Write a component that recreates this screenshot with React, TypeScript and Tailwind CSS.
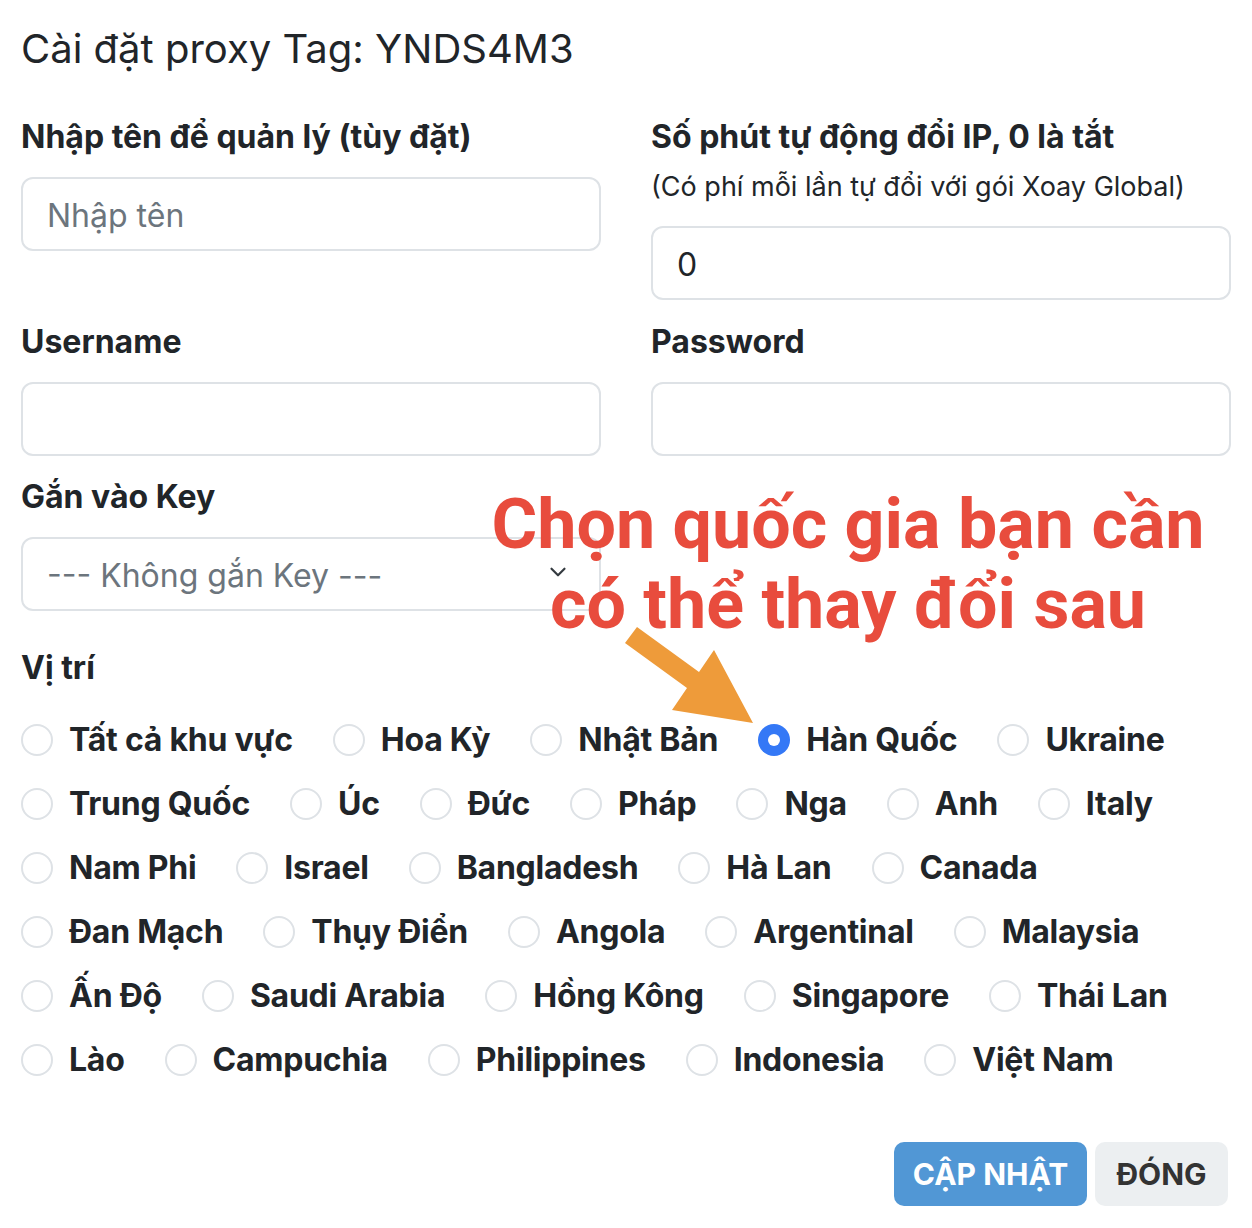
import { ChevronDown } from 'lucide-react';

const rows: string[][] = [
  ['Tất cả khu vực', 'Hoa Kỳ', 'Nhật Bản', 'Hàn Quốc', 'Ukraine'],
  ['Trung Quốc', 'Úc', 'Đức', 'Pháp', 'Nga', 'Anh', 'Italy'],
  ['Nam Phi', 'Israel', 'Bangladesh', 'Hà Lan', 'Canada'],
  ['Đan Mạch', 'Thụy Điển', 'Angola', 'Argentinal', 'Malaysia'],
  ['Ấn Độ', 'Saudi Arabia', 'Hồng Kông', 'Singapore', 'Thái Lan'],
  ['Lào', 'Campuchia', 'Philippines', 'Indonesia', 'Việt Nam'],
];

function Label({ children }: { children: React.ReactNode }) {
  return <div className="text-[32px] leading-[48px] font-bold text-[#212529] mb-[16px]">{children}</div>;
}

function Input({ placeholder, value }: { placeholder?: string; value?: string }) {
  return (
    <div className="h-[74px] border-2 border-[#dee2e6] rounded-[12px] px-[24px] pt-[4px] flex items-center text-[32px]">
      {value ? <span className="text-[#212529]">{value}</span> : <span className="text-[#6c757d]">{placeholder}</span>}
    </div>
  );
}

function Radio({ label, checked }: { label: string; checked?: boolean }) {
  return (
    <div className="flex items-center mr-[40px]">
      {checked ? (
        <div className="w-[32px] h-[32px] rounded-full bg-[#3478f6] flex items-center justify-center">
          <div className="w-[12px] h-[12px] rounded-full bg-white" />
        </div>
      ) : (
        <div className="w-[32px] h-[32px] rounded-full border-2 border-[#dee2e6]" />
      )}
      <span className="ml-[16px] text-[32px] font-bold tracking-[-0.25px] text-[#212529]">{label}</span>
    </div>
  );
}

export default function App() {
  return (
    <div className="relative w-[1252px] h-[1228px] bg-white font-['Inter',sans-serif] text-[#212529] overflow-hidden">
      {/* Header */}
      <div className="px-[21px] pt-[24px] h-[113px]">
        <h4 className="text-[40px] leading-[50px] font-normal">Cài đặt proxy Tag: YNDS4M3</h4>
      </div>

      <div className="px-[21px]">
        {/* name + auto rotate */}
        <div className="flex gap-[50px]">
          <div className="w-[580px]">
            <Label>Nhập tên để quản lý (tùy đặt)</Label>
            <Input placeholder="Nhập tên" />
          </div>
          <div className="w-[580px]">
            <div className="text-[32px] leading-[48px] font-bold">Số phút tự động đổi IP, 0 là tắt</div>
            <div className="text-[27px] leading-[44px] pt-[4px] mb-[17px]">(Có phí mỗi lần tự đổi với gói Xoay Global)</div>
            <Input value="0" />
          </div>
        </div>

        {/* user / pass */}
        <div className="flex gap-[50px] mt-[18px]">
          <div className="w-[580px]">
            <Label>Username</Label>
            <Input />
          </div>
          <div className="w-[580px]">
            <Label>Password</Label>
            <Input />
          </div>
        </div>

        {/* key */}
        <div className="w-[580px] mt-[17px]">
          <Label>Gắn vào Key</Label>
          <div className="h-[74px] border-2 border-[#dee2e6] rounded-[12px] pl-[24px] pr-[28px] pt-[4px] flex items-center justify-between text-[32px] text-[#6c757d]">
            <span>--- Không gắn Key ---</span>
            <ChevronDown className="w-[26px] h-[26px] text-[#343a40] -mt-[8px]" strokeWidth={2} />
          </div>
        </div>

        {/* location */}
        <div className="mt-[33px]">
          <Label>Vị trí</Label>
          <div className="flex flex-col">
            {rows.map((r, i) => (
              <div key={i} className="flex h-[64px] items-center">
                {r.map((c) => (
                  <Radio key={c} label={c} checked={c === 'Hàn Quốc'} />
                ))}
              </div>
            ))}
          </div>
        </div>
      </div>

      {/* Footer buttons */}
      <div className="flex justify-end gap-[8px] pr-[24px] mt-[50px]">
        <button className="h-[64px] w-[193px] rounded-[10px] bg-[#5197d5] text-white text-[30px] font-bold">CẬP NHẬT</button>
        <button className="h-[64px] w-[133px] rounded-[10px] bg-[#eceff1] text-[#333] text-[30px] font-bold">ĐÓNG</button>
      </div>

      {/* annotation */}
      <div className="absolute left-[488px] top-[484px] w-[720px] text-center font-['Roboto',sans-serif] font-bold text-[#e84c3d] text-[70px] leading-[80px]">
        <div>Chọn quốc gia bạn cần</div>
        <div>có thể thay đổi sau</div>
      </div>
      <svg className="absolute left-0 top-0 pointer-events-none" width="1252" height="1228">
        <polygon
          points="637,627 699,672 714,650 753,723 672,710 687,688 625,643"
          fill="#ee9b3a"
        />
      </svg>
    </div>
  );
}
